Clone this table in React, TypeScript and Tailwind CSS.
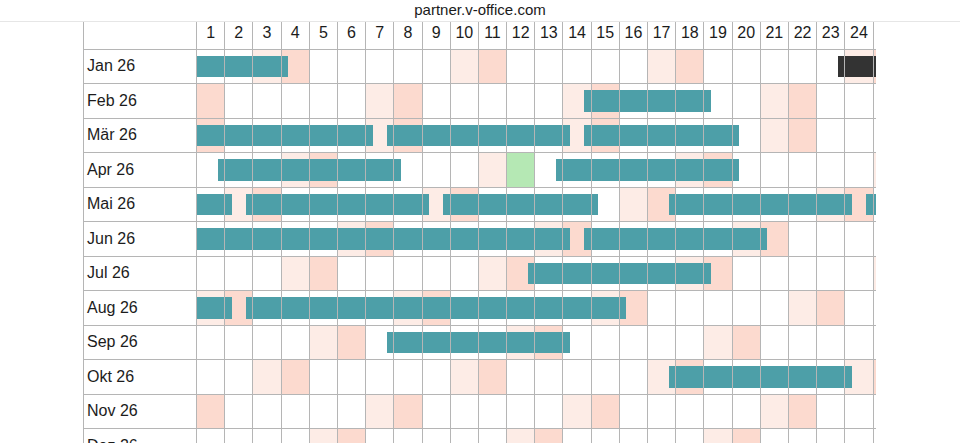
import React from "react";

type Bar = { from?: number; to?: number; dark?: boolean };
type Month = { label: string; m: number; bars: Bar[] };

const CELL = 28.2;
const YEAR = 2026;
const TODAY = { m: 3, d: 12 };
// only the first 24 days fit the visible part of the grid
const VISIBLE_DAYS = 24;

const months: Month[] = [
  { label: "Jan 26", m: 0, bars: [{ to: 4 }, { from: 23, dark: true }] },
  { label: "Feb 26", m: 1, bars: [{ from: 14, to: 19 }, { from: 27 }] },
  { label: "Mär 26", m: 2, bars: [{ to: 7 }, { from: 7, to: 14 }, { from: 14, to: 20 }, { from: 27, to: 31 }] },
  { label: "Apr 26", m: 3, bars: [{ from: 1, to: 8 }, { from: 13, to: 20 }] },
  { label: "Mai 26", m: 4, bars: [{ to: 2 }, { from: 2, to: 9 }, { from: 9, to: 15 }, { from: 17, to: 24 }, { from: 24 }] },
  { label: "Jun 26", m: 5, bars: [{ to: 14 }, { from: 14, to: 21 }] },
  { label: "Jul 26", m: 6, bars: [{ from: 12, to: 19 }, { from: 26 }] },
  { label: "Aug 26", m: 7, bars: [{ to: 2 }, { from: 2, to: 16 }] },
  { label: "Sep 26", m: 8, bars: [{ from: 7, to: 14 }] },
  { label: "Okt 26", m: 9, bars: [{ from: 17, to: 24 }] },
  { label: "Nov 26", m: 10, bars: [] },
  { label: "Dez 26", m: 11, bars: [] },
];

const daysIn = (m: number) => new Date(YEAR, m + 1, 0).getDate();

const cellBg = (m: number, d: number) => {
  if (m === TODAY.m && d === TODAY.d) return "bg-[#b5e8b4]";
  const dow = new Date(YEAR, m, d).getDay();
  if (dow === 0) return "bg-[#fcdacf]";
  if (dow === 6) return "bg-[#fdece6]";
  return "bg-white";
};

const MonthRow = ({ month }: { month: Month }) => {
  const days = daysIn(month.m);
  return (
    <div className="flex h-[34.5px] border-b border-[#b5b5b5]">
      <div className="flex w-[113px] shrink-0 items-center border-l border-[#b5b5b5] pl-[3px] text-[16px] text-[#1c1c1c]">
        {month.label}
      </div>
      <div className="relative flex h-full">
        {Array.from({ length: days }, (_, i) => (
          <div
            key={i}
            className={`relative h-full w-[28.2px] shrink-0 after:absolute after:inset-y-0 after:left-0 after:z-20 after:w-px after:bg-[#b5b5b5] ${cellBg(month.m, i + 1)}`}
          />
        ))}
        {month.bars.map((b, i) => {
          const left = b.from ? (b.from - 1) * CELL + 21.5 : 0;
          const right = b.to ? (b.to - 1) * CELL + 7.5 : days * CELL;
          return (
            <div
              key={i}
              className={`absolute top-[6px] z-10 h-[21.5px] ${b.dark ? "bg-[#333333]" : "bg-[#4d9fa8]"}`}
              style={{ left, width: right - left }}
            />
          );
        })}
      </div>
    </div>
  );
};

const App = () => {
  return (
    <div className="h-[443px] w-full overflow-hidden bg-white font-['Liberation_Sans',Arial,sans-serif] text-[#1c1c1c]">
      {/* address bar */}
      <div className="flex h-[22px] items-center justify-center border-b border-[#e6e6e6] text-[15px] text-[#1a1a1a]">
        partner.v-office.com
      </div>

      <div className="ml-[83px] w-[793px] overflow-hidden">
        {/* day numbers */}
        <div className="flex h-[27.5px] border-b border-[#b5b5b5]">
          <div className="w-[113px] shrink-0 border-l border-[#b5b5b5]" />
          {Array.from({ length: 31 }, (_, i) => (
            <div
              key={i}
              className="flex h-full w-[28.2px] shrink-0 justify-center border-l border-[#b5b5b5] pt-[2px] text-[16px] leading-[17px]"
            >
              {i < VISIBLE_DAYS ? i + 1 : ""}
            </div>
          ))}
        </div>

        {months.map((mo) => (
          <MonthRow key={mo.label} month={mo} />
        ))}
      </div>
    </div>
  );
};

export default App;
